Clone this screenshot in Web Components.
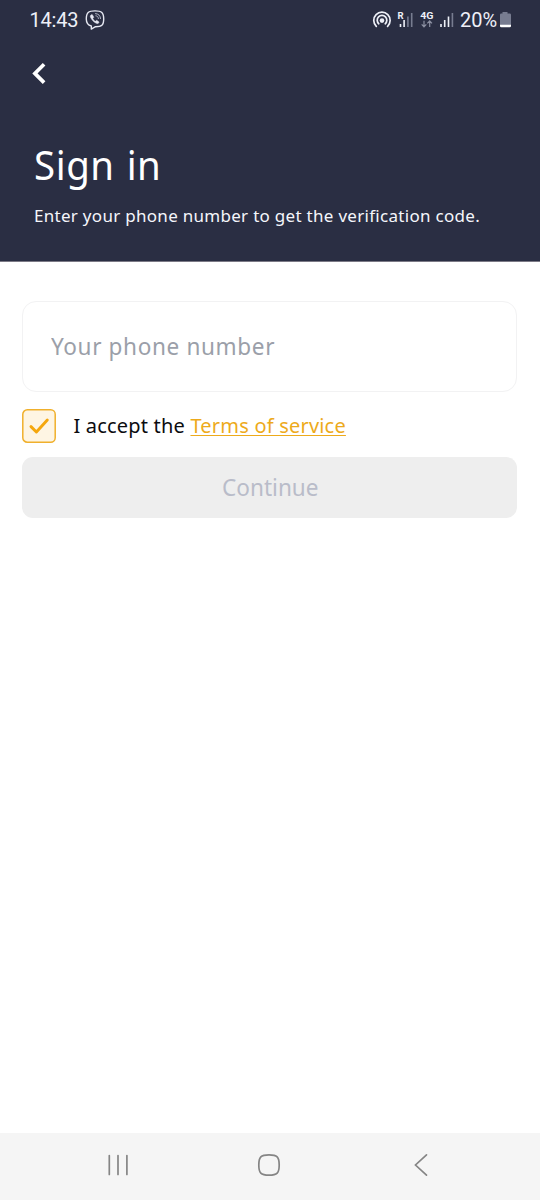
<!DOCTYPE html>
<html lang="en">
<head>
<meta charset="utf-8">
<title>Sign in</title>
<style>
html,body{margin:0;background:#fff}
body{font-family:"Noto Sans",sans-serif}
</style>
</head>
<body>
<sign-in-screen></sign-in-screen>
<script>
const define = (name, html) => customElements.define(name, class extends HTMLElement {
  constructor() {
    super();
    const t = document.createElement('template');
    t.innerHTML = html;
    this.attachShadow({mode: 'open'}).append(t.content.cloneNode(true));
  }
});

define('status-bar', `
<style>
:host{display:flex;height:40px;align-items:center;box-sizing:border-box;padding:0 29px 0 29.5px;font:20px/40px Roboto,sans-serif;color:#eef0f8}
svg{display:block;flex:none}
.time{width:55px;letter-spacing:-.2px;white-space:nowrap}
.icons{margin-left:auto;width:87.5px}
.pct{width:39px;letter-spacing:0;white-space:nowrap;margin-left:.5px}
text{font:bold 9.5px Roboto,sans-serif}
</style>
<span class="time">14:43</span>
<svg width="20" height="40" viewBox="85 0 20 40" fill="none" stroke="#e6e8f2" stroke-width="1.4" stroke-linecap="round" stroke-linejoin="round">
<path d="M95 10.900c6.600 0 8.700 1.700 8.700 8.200s-2.100 7.600-8.200 7.600l-4.200 2.400v-3.100c-3.900-.9-5-3-5-6.900 0-6.500 2.100-8.200 8.700-8.200z"/>
<path d="M91.300 14.700c-1.500 1-1.300 2 .2 4.300 1.500 2.300 3 3.600 5.500 4.500 1.300.3 1.900-.7 2-1.500l-2.300-1.700-1.300 1c-1.400-.7-2.200-1.700-2.600-3l1-1-1.300-2.400z" fill="#e6e8f2" stroke-width=".5"/>
<path d="M95.500 13.600c3 .2 4.900 2 5 5M95.900 15.800c1.600.2 2.400 1.100 2.500 2.700" stroke="#b3b7c7" stroke-width="1"/>
</svg>
<svg class="icons" width="87.500" height="40" viewBox="372 0 87.500 40">
<g fill="none" stroke="#eef0f8" stroke-width="1.700" stroke-linecap="round">
<path d="M376.300 26.300a8.200 8.200 0 1 1 11.300 0"/>
<path d="M378.800 23.800a4.800 4.800 0 1 1 6.400 0"/></g>
<circle cx="382" cy="20.600" r="2.300" fill="#eef0f8"/>
<text x="397.600" y="18.600" fill="#eef0f8">R</text>
<g fill="#eef0f8"><rect x="399.700" y="24" width="1.600" height="3"/><rect x="403.300" y="20" width="1.600" height="7"/></g>
<g fill="#777c90"><rect x="407.100" y="16.500" width="1.600" height="10.500"/><rect x="410.900" y="13" width="1.600" height="14"/></g>
<text x="420.300" y="18.700" textLength="13.200" lengthAdjust="spacingAndGlyphs" fill="#eef0f8">4G</text>
<g fill="none" stroke="#8c90a2" stroke-width="1.200"><path d="M424 20.700v6M421.700 24.300l2.300 2.500 2.300-2.500M429.700 27v-6M427.400 23.400l2.300-2.500 2.300 2.500"/></g>
<g fill="#eef0f8"><rect x="440.200" y="24" width="1.600" height="3"/><rect x="443.900" y="20" width="1.600" height="7"/><rect x="447.700" y="16.500" width="1.600" height="10.500"/></g>
<rect x="451.600" y="13" width="1.600" height="14" fill="#777c90"/>
</svg>
<span class="pct">20%</span>
<svg width="12" height="40" viewBox="499 0 12 40"><path d="M502.500 12h5v1.500h2.200q1.300 0 1.300 1.300V25h-11V14.800q0-1.300 1.300-1.300h1.200z" fill="#777c90"/><path d="M500 24.800h11v1.200q0 1.300-1.300 1.300h-8.400q-1.300 0-1.300-1.300z" fill="#fff"/></svg>
`);

define('page-header', `
<style>
:host{display:block;box-sizing:border-box;height:262px;background:#2a2e43;border-bottom:1px solid #7c7a86;color:#fff}
.back{display:block;margin:20px 0 0 30px}
h1{margin:53px 0 0 34px;font-size:40px;font-weight:400;line-height:56px;letter-spacing:.6px;word-spacing:1.500px;transform:scaleX(.96);transform-origin:0 50%}
p{margin:10.500px 0 0 34px;font-size:17px;line-height:24px;letter-spacing:.29px;white-space:nowrap;color:#f5f6fb}
</style>
<status-bar></status-bar>
<svg class="back" width="20" height="24" viewBox="30 60 20 24" fill="none" stroke="#fff" stroke-width="3.700"><path d="M44.100 64.200l-9.200 9.200 9.200 9.200"/></svg>
<h1><slot name="title"></slot></h1>
<p><slot></slot></p>
`);

define('phone-field', `
<style>
:host{display:flex;align-items:center;box-sizing:border-box;height:91px;border:1px solid #f2f2f3;border-radius:14px;padding:0 0 1px 28px;font-size:24px;line-height:32px;letter-spacing:.68px;color:#9b9fa9}
span{transform:scaleX(.94);transform-origin:0 50%}
</style><span><slot></slot></span>`);

define('check-box', `
<style>
:host{display:flex;align-items:center;height:34px;font-size:20px;line-height:34px;letter-spacing:.2px;color:#0c0c0f;white-space:nowrap}
svg{display:block;margin-right:17px;flex:none}
</style>
<svg width="34" height="34" viewBox="0 0 34 34"><rect x=".8" y=".8" width="32.400" height="32.400" rx="4.500" fill="#fef5e3" stroke="#f0b02c" stroke-width="1.500"/><path d="M9 17.600l5.400 5.400 10.900-11.900" fill="none" stroke="#f5a70c" stroke-width="2.900" stroke-linecap="round" stroke-linejoin="round"/></svg><span><slot></slot></span>`);

define('text-link', `<style>
:host{display:inline;color:#edaa1b;text-decoration:underline;text-decoration-thickness:1.300px;text-underline-offset:2px;text-decoration-skip-ink:none}
</style><slot></slot>`);

define('submit-button', `
<style>
:host{display:flex;align-items:center;justify-content:center;box-sizing:border-box;height:61px;padding-bottom:2px;border-radius:11px;background:#eee;color:#b9bcc9;font-size:24px;line-height:32px}
span{transform:scaleX(.94)}
</style><span><slot></slot></span>`);

define('nav-bar', `
<style>
:host{display:flex;align-items:center;box-sizing:border-box;height:67px;padding:0 0 3px 107px;background:#f5f5f5}
svg{display:block;fill:none;stroke:#858585;stroke-width:1.700;stroke-linecap:round}
.home{margin:0 133px 0 128px}
</style>
<svg width="22" height="24" viewBox="0 0 22 24"><path d="M2.300 2.500v19M11 2.500v19M19.900 2.500v19"/></svg>
<svg class="home" width="24" height="24" viewBox="0 0 24 24"><path d="M12 1.800C20.200 1.800 22.200 3.800 22.200 12S20.200 22.200 12 22.200 1.800 20.200 1.800 12 3.800 1.800 12 1.800z"/></svg>
<svg width="15" height="24" viewBox="0 0 15 24"><path d="M12.500 1.800L1.500 12l11 10.200"/></svg>
`);

define('sign-in-screen', `
<style>
:host{display:flex;flex-direction:column;height:1200px;width:540px;overflow:hidden}
main{flex:1;padding:39px 22.600px 0 22.400px;display:flex;flex-direction:column}
check-box{margin:16.500px 0 14.500px}
</style>
<page-header><span slot="title">Sign in</span>Enter your phone number to get the verification code.</page-header>
<main>
<phone-field>Your phone number</phone-field>
<check-box>I accept the <text-link>Terms of service</text-link></check-box>
<submit-button>Continue</submit-button>
</main>
<nav-bar></nav-bar>
`);
</script>
</body>
</html>
